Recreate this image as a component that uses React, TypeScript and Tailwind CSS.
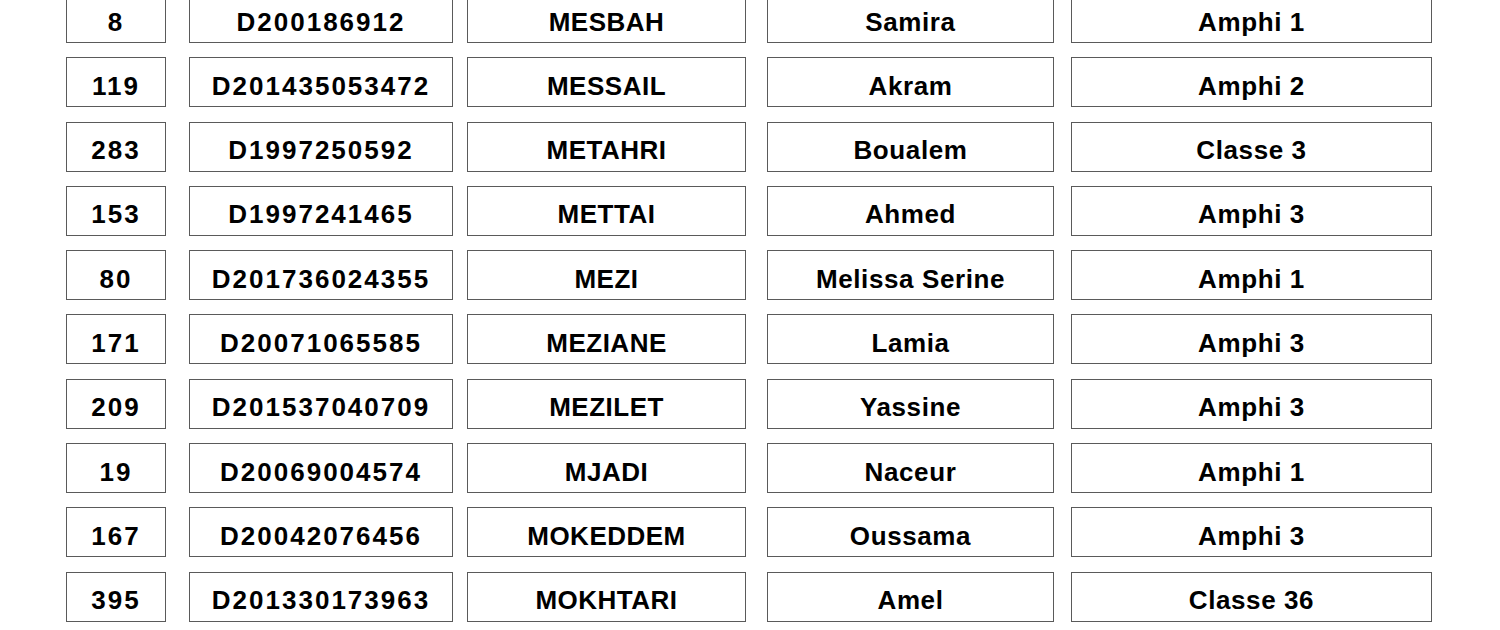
import React from "react";

const rows: [string, string, string, string, string][] = [
  ["8", "D200186912", "MESBAH", "Samira", "Amphi 1"],
  ["119", "D201435053472", "MESSAIL", "Akram", "Amphi 2"],
  ["283", "D1997250592", "METAHRI", "Boualem", "Classe 3"],
  ["153", "D1997241465", "METTAI", "Ahmed", "Amphi 3"],
  ["80", "D201736024355", "MEZI", "Melissa Serine", "Amphi 1"],
  ["171", "D20071065585", "MEZIANE", "Lamia", "Amphi 3"],
  ["209", "D201537040709", "MEZILET", "Yassine", "Amphi 3"],
  ["19", "D20069004574", "MJADI", "Naceur", "Amphi 1"],
  ["167", "D20042076456", "MOKEDDEM", "Oussama", "Amphi 3"],
  ["395", "D201330173963", "MOKHTARI", "Amel", "Classe 36"],
];

const cell =
  "h-[50px] border border-[#5a5a5a] flex items-center justify-center pt-[7px] text-[26px] font-bold text-black whitespace-pre leading-none";

export default function App() {
  return (
    <div
      className="w-[1500px] h-[630px] bg-white overflow-hidden"
      style={{ fontFamily: '"Liberation Sans", Arial, sans-serif' }}
    >
      <div className="flex flex-col gap-[14.3px] mt-[-7px] pl-[66px]">
        {rows.map((r, i) => (
          <div key={i} className="flex">
            <div className={`${cell} w-[100px] tracking-[2px]`}>{r[0]}</div>
            <div className={`${cell} w-[264px] ml-[23px] tracking-[2px]`}>{r[1]}</div>
            <div className={`${cell} w-[279px] ml-[14px] tracking-[0.5px]`}>{r[2]}</div>
            <div className={`${cell} w-[287px] ml-[21px] tracking-[0.6px]`}>{r[3]}</div>
            <div className={`${cell} w-[361px] ml-[17px] tracking-[0.6px]`}>{r[4]}</div>
          </div>
        ))}
      </div>
    </div>
  );
}
